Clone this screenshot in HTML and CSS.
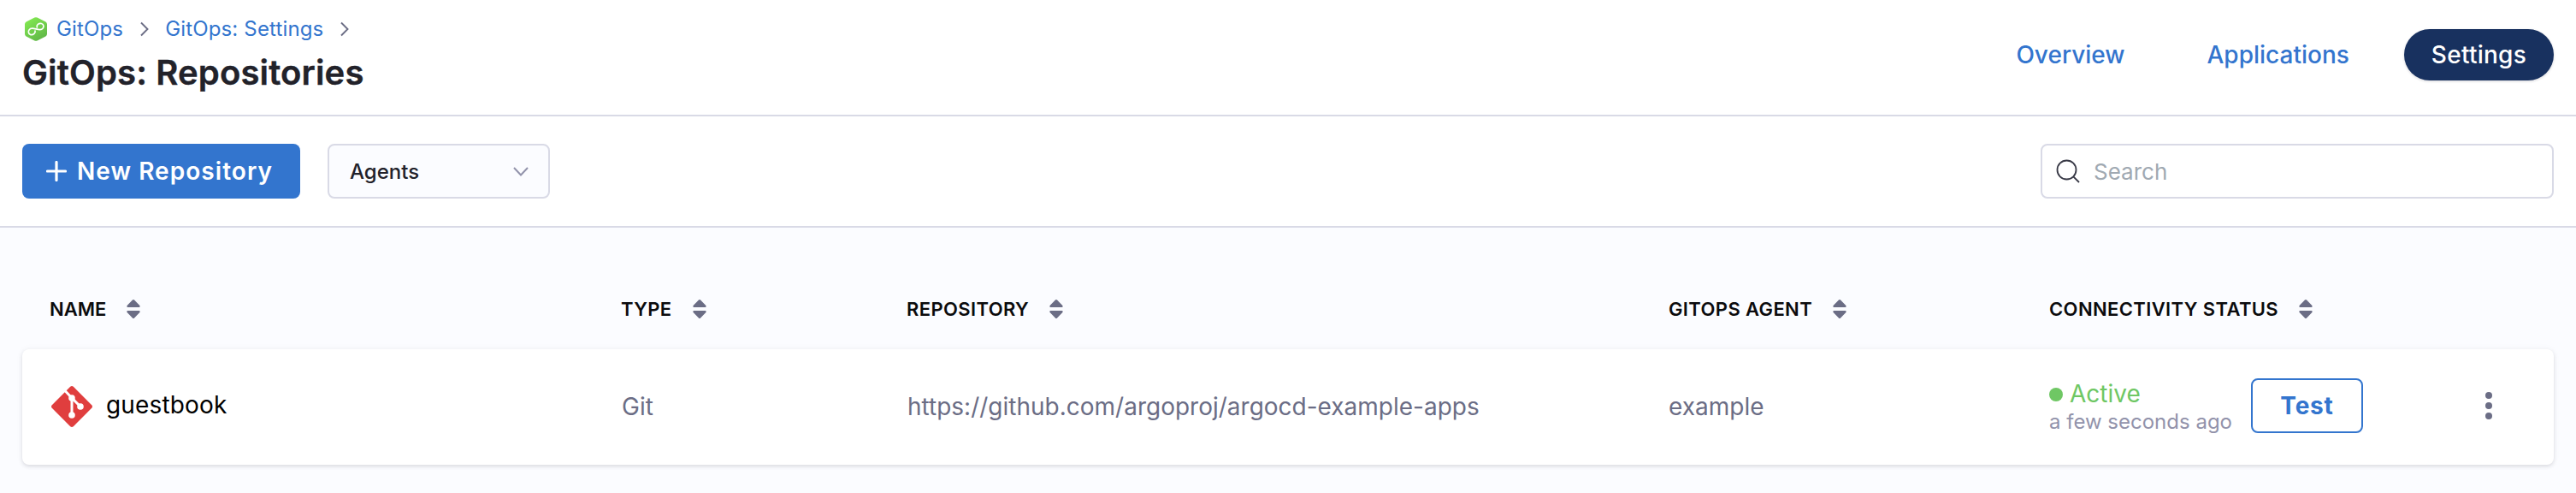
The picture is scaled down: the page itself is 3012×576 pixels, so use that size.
FILE: index.html
```
<!DOCTYPE html>
<html lang="en">
<head>
<meta charset="utf-8">
<title>GitOps: Repositories</title>
<link rel="stylesheet" href="styles.css">
</head>
<body>
<svg class="defs" width="0" height="0" aria-hidden="true">
  <symbol id="sort" viewBox="0 0 16 22"><path d="M6.9.6Q8-.4 9.1.6L15.4 6.900Q16.200 9 14.600 9H1.400Q-.2 9 .6 6.900ZM6.900 21.400Q8 22.400 9.100 21.400L15.400 15.100Q16.200 13 14.600 13H1.400Q-.2 13 .6 15.100Z" fill="#6b6d85"/></symbol>
  <symbol id="chevron" viewBox="0 0 10 18"><path d="M1 1.500 8.500 9 1 16.500" fill="none" stroke="#6b6d85" stroke-width="1.900"/></symbol>
</svg>
<header class="header">
  <div class="heading">
    <nav class="crumbs">
      <svg class="logo" viewBox="0 0 26 28"><defs><linearGradient id="g" x1="0" y1="0" x2=".6" y2="1"><stop offset="0" stop-color="#86ee52"/><stop offset="1" stop-color="#62b948"/></linearGradient></defs><path d="M11.400.6Q13-.3 14.600.6L24.400 5.600Q26 6.500 26 8.300V19.700Q26 21.500 24.400 22.400L14.600 27.400Q13 28.300 11.400 27.400L1.600 22.400Q0 21.500 0 19.700V8.300Q0 6.500 1.600 5.600Z" fill="url(#g)"/><path d="M8.500 13.200C5.500 13.400 4 15.500 4.400 17.800 4.800 20.900 8.500 21.600 10.900 19.400 12.200 18.200 12.300 17 12 16M17.800 14.700C20.600 14.500 22.200 12.500 21.900 10.200 21.500 7.300 17.900 6.400 15.300 8.400 14.100 9.400 13.900 10.600 14.300 11.900M8.500 13.200C11 12.900 15 14.900 17.800 14.700" fill="none" stroke="#fff" stroke-width="1.700" stroke-linecap="round"/></svg>
      <a class="crumb">GitOps</a>
      <svg class="sep"><use href="#chevron"/></svg>
      <a class="crumb">GitOps: Settings</a>
      <svg class="sep"><use href="#chevron"/></svg>
    </nav>
    <h1 class="title">GitOps: Repositories</h1>
  </div>
  <nav class="tabs">
    <a class="tab">Overview</a>
    <a class="tab">Applications</a>
    <a class="tab tab-active">Settings</a>
  </nav>
</header>
<section class="toolbar">
  <button class="new-button"><svg class="plus" viewBox="0 0 24 24"><path d="M12 1.500V22.500M1.500 12H22.500" stroke="#fff" stroke-width="3.200" stroke-linecap="round"/></svg><span>New Repository</span></button>
  <div class="select"><span>Agents</span><svg class="caret" viewBox="0 0 18 11"><path d="M1 1 9 9.500 17 1" fill="none" stroke="#9293ab" stroke-width="2"/></svg></div>
  <div class="search"><svg class="lens" viewBox="0 0 28 28"><circle cx="12.500" cy="12.500" r="11" /><path d="M20.300 20.300 27 27"/></svg><span>Search</span></div>
</section>
<main class="content">
  <div class="grid columns">
    <div class="column column-name">NAME<svg class="sort"><use href="#sort"/></svg></div>
    <div class="column">TYPE<svg class="sort"><use href="#sort"/></svg></div>
    <div class="column">REPOSITORY<svg class="sort"><use href="#sort"/></svg></div>
    <div class="column">GITOPS AGENT<svg class="sort"><use href="#sort"/></svg></div>
    <div class="column">CONNECTIVITY STATUS<svg class="sort"><use href="#sort"/></svg></div>
  </div>
  <div class="grid row">
    <div class="name"><svg class="git" viewBox="0 0 48 48"><path d="M22.200.8Q24-.8 25.800.8L47.200 22.200Q48.800 24 47.200 25.800L25.800 47.200Q24 48.800 22.200 47.200L.8 25.800Q-.8 24 .8 22.200Z" fill="#e03e3e"/><path d="M16 5.500 24 14 34 24M24 14V34" fill="none" stroke="#fff" stroke-width="3"/><g fill="#fff"><circle cx="24" cy="14" r="3.800"/><circle cx="34" cy="24" r="3.800"/><circle cx="24" cy="34" r="3.800"/></g></svg><span class="repo-name">guestbook</span></div>
    <div class="cell">Git</div>
    <div class="cell">https://github.com/argoproj/argocd-example-apps</div>
    <div class="cell cell-agent">example</div>
    <div class="status">
      <div class="state"><div class="active"><i class="dot"></i>Active</div><div class="ago">a few seconds ago</div></div>
      <button class="test">Test</button>
      <svg class="kebab" viewBox="0 0 8 32"><g fill="#6b6d85"><circle cx="4" cy="4" r="4"/><circle cx="4" cy="16" r="4"/><circle cx="4" cy="28" r="4"/></g></svg>
    </div>
  </div>
</main>
</body>
</html>
```
FILE: styles.css
```
* { box-sizing: border-box; }
body { margin: 0; height: 576px; overflow: hidden; background: #fbfcff; color: #22222a; font-family: Inter, sans-serif; }
.defs { display: block; }
button { font-family: inherit; }
.header { height: 136px; display: flex; justify-content: space-between; background: #fff; border-bottom: 2px solid #d9dae6; padding: 0 26px; }
.heading { padding-top: 18px; }
.crumbs { display: flex; align-items: center; height: 32px; padding-left: 3px; }
.logo { width: 26px; height: 28px; margin-right: 11px; }
.crumb { font-size: 24px; line-height: 32px; letter-spacing: .15px; color: #3375ce; }
.sep { width: 10px; height: 18px; margin: 0 19px 0 20px; }
.title { margin: 9px 0 0; font-size: 40px; line-height: 52px; font-weight: 600; letter-spacing: .15px; -webkit-text-stroke: .4px #22222a; }
.tabs { display: flex; align-items: flex-start; padding-top: 34px; }
.tab { height: 60px; line-height: 60px; padding: 0 32px; margin-left: 32px; border-radius: 30px; font-size: 28px; font-weight: 500; color: #3375ce; }
.tab-active { color: #fff; background: #18315f; letter-spacing: .25px; box-shadow: 0 1px 3px rgba(40, 41, 61, .2); }
.toolbar { height: 130px; display: flex; align-items: center; background: #fff; border-bottom: 2px solid #d9dae6; padding: 0 26px; }
.new-button { width: 325px; height: 64px; display: flex; align-items: center; gap: 12px; padding: 0 0 0 28px; border: 0; border-radius: 8px; background: #3375ce; color: #fff; font-size: 28px; font-weight: 600; white-space: nowrap; letter-spacing: 1.05px; }
.plus { width: 24px; height: 24px; }
.select { width: 260px; height: 64px; margin-left: 32px; display: flex; align-items: center; justify-content: space-between; padding: 0 23px 0 24px; border: 2px solid #d9dae6; border-radius: 8px; background: #fbfcff; font-size: 24px; font-weight: 500; }
.caret { width: 18px; height: 11px; }
.search { width: 600px; height: 64px; margin-left: auto; display: flex; align-items: center; gap: 16px; padding: 0 16px; border: 2px solid #d9dae6; border-radius: 8px; font-size: 26px; color: #a0a9b2; }
.lens { width: 28px; height: 28px; fill: none; stroke: #383946; stroke-width: 1.800; }
.content { padding: 70px 26px 0; }
.grid { display: grid; grid-template-columns: 668px 334px 891px 445px 1fr; align-items: center; padding: 0 32px; }
.columns { height: 50px; font-size: 22px; font-weight: 600; letter-spacing: .38px; color: #0b0b0d; }
.column { display: flex; align-items: center; gap: 24px; }
.column-name { letter-spacing: 0; }
.sort { width: 16px; height: 22px; }
.row { height: 135px; margin-top: 22px; padding-bottom: 3px; background: #fff; border-radius: 8px; box-shadow: 0 2px 4px rgba(96, 97, 112, .18), 0 0 10px rgba(40, 41, 61, .04); }
.name { display: flex; align-items: center; gap: 16px; padding: 1px 0 0 2px; font-size: 28px; letter-spacing: .15px; color: #000; }
.repo-name { padding-bottom: 3px; }
.cell { font-size: 28px; color: #6b6d85; padding: 1px 0 0 1px; }
.cell-agent { padding-left: 0; }
.git { width: 48px; height: 48px; }
.status { display: flex; align-items: center; }
.state { width: 236px; padding-top: 1px; }
.active { display: flex; align-items: center; gap: 8px; font-size: 28px; line-height: 36px; color: #6fc764; }
.dot { width: 16px; height: 16px; margin-top: 2px; border-radius: 50%; background: #6fc764; }
.ago { font-size: 24px; line-height: 30px; color: #9293ab; }
.test { width: 131px; height: 64px; padding: 0; border: 2px solid #3375ce; border-radius: 8px; background: #fff; color: #3375ce; font-size: 28px; font-weight: 700; letter-spacing: .8px; }
.kebab { width: 8px; height: 32px; margin-left: auto; margin-right: 40px; }
```
